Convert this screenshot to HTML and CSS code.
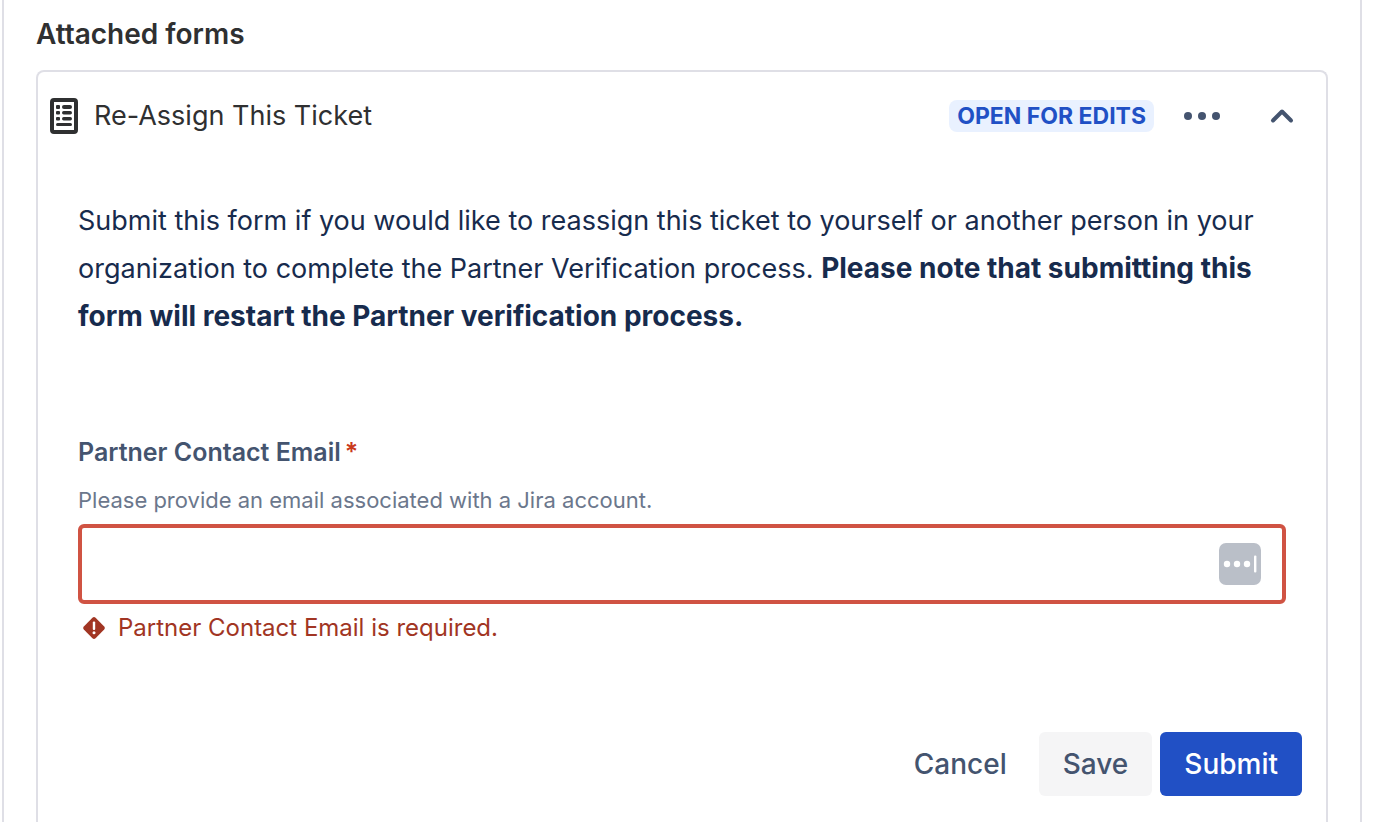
FILE: index.html
```html
<!DOCTYPE html>
<html lang="en">
<head>
<meta charset="utf-8">
<title>Attached forms</title>
<link rel="stylesheet" href="styles.css">
</head>
<body>
<main class="panel">
  <h2 class="panel-title">Attached forms</h2>
  <section class="card">
    <header class="card-header">
      <svg class="form-icon" viewBox="0 0 28 36" aria-hidden="true">
        <rect x="2" y="2" width="24" height="32" rx="2" fill="none" stroke="#2f3031" stroke-width="4"/>
        <g fill="#2f3031">
          <rect x="6" y="7" width="4" height="4" rx="1"/><rect x="12" y="7" width="10" height="4" rx="2"/>
          <rect x="6" y="13" width="4" height="3.4" rx="1"/><rect x="12" y="13" width="10" height="3.4" rx="1.7"/>
          <rect x="6" y="19" width="4" height="3.4" rx="1"/><rect x="12" y="19" width="10" height="3.4" rx="1.7"/>
          <rect x="6" y="25" width="16" height="3" rx="1.5"/>
        </g>
      </svg>
      <h3 class="card-title">Re-Assign This Ticket</h3>
      <span class="lozenge">OPEN FOR EDITS</span>
      <button class="icon-button" type="button" aria-label="More actions">
        <svg width="36" height="8" viewBox="0 0 36 8" fill="#44546f"><circle cx="4" cy="4" r="4"/><circle cx="18" cy="4" r="4"/><circle cx="32" cy="4" r="4"/></svg>
      </button>
      <button class="icon-button" type="button" aria-label="Collapse">
        <svg width="24" height="16" viewBox="0 0 24 16" fill="none" stroke="#44546f" stroke-width="4" stroke-linecap="round" stroke-linejoin="round"><path d="M3 12.5 12 3.5 21 12.5"/></svg>
      </button>
    </header>
    <form class="form" novalidate>
      <p class="intro">Submit this form if you would like to reassign this ticket to yourself or another person in your organization to complete the Partner Verification process. <strong>Please note that submitting this form will restart the Partner verification process.</strong></p>
      <label class="label" for="email">Partner Contact Email<span class="required">*</span></label>
      <p class="help" id="email-help">Please provide an email associated with a Jira account.</p>
      <div class="field">
        <input class="input" id="email" type="email" aria-describedby="email-help email-error" aria-invalid="true">
        <svg class="autofill" viewBox="0 0 42 42" aria-hidden="true">
          <rect width="42" height="42" rx="7" fill="#babfc8"/>
          <g fill="#fff"><circle cx="8" cy="21" r="3.2"/><circle cx="18" cy="21" r="3.2"/><circle cx="28" cy="21" r="3.2"/><rect x="35" y="12.5" width="2.4" height="17" rx="1"/></g>
        </svg>
      </div>
      <p class="error" id="email-error">
        <svg class="error-icon" viewBox="0 0 24 24" aria-hidden="true">
          <rect x="3.7" y="3.7" width="16.6" height="16.6" rx="2.2" transform="rotate(45 12 12)" fill="#a13523"/>
          <rect x="10.8" y="5.6" width="2.4" height="8.4" rx="1" fill="#fff"/><circle cx="12" cy="16.8" r="1.5" fill="#fff"/>
        </svg>
        Partner Contact Email is required.
      </p>
      <div class="actions">
        <button class="button button-subtle" type="button">Cancel</button>
        <button class="button button-default" type="button">Save</button>
        <button class="button button-primary" type="submit">Submit</button>
      </div>
    </form>
  </section>
</main>
</body>
</html>
```
FILE: styles.css
```css
* {
  box-sizing: border-box;
}

body {
  margin: 0;
  min-height: 100vh;
  display: flex;
  background: #fff;
  color: #172b4d;
  font-family: Inter, "Liberation Sans", sans-serif;
}

h2, h3, p {
  margin: 0;
}

button {
  border: 0;
  background: none;
  font-family: inherit;
  cursor: pointer;
}

.panel {
  flex: 1;
  margin: 0 32px 0 2px;
  padding: 18px 32px 0;
  border: 2px solid #dfdfe6;
  border-width: 0 2px;
  display: flex;
  flex-direction: column;
}

.panel-title {
  margin-bottom: 20px;
  font-size: 28px;
  font-weight: 600;
  line-height: 32px;
  color: #2f3031;
}

.card {
  flex: 1;
  border: 2px solid #dfdfe6;
  border-bottom: 0;
  border-radius: 8px 8px 0 0;
}

.card-header {
  display: flex;
  align-items: center;
  padding: 20px 20px 20px 12px;
}

.form-icon {
  width: 28px;
  height: 36px;
  margin-right: 16px;
}

.card-title {
  flex: 1;
  font-size: 27px;
  font-weight: 400;
  line-height: 48px;
  color: #2f3031;
}

.lozenge {
  margin-right: 18px;
  padding: 0 8px;
  border-radius: 8px;
  background: #e9f1ff;
  color: #2150c5;
  font-size: 23px;
  font-weight: 700;
  line-height: 32px;
}

.icon-button {
  display: flex;
  padding: 12px;
}

.icon-button + .icon-button {
  margin-left: 26px;
}

.form {
  padding: 37px 24px 24px 40px;
}

.intro {
  margin-right: 16px;
  font-size: 27px;
  line-height: 48px;
}

.intro strong {
  font-size: 28px;
  font-weight: 700;
  line-height: 32px;
}

.label {
  display: block;
  margin: 95px 0 16px;
  color: #44546f;
  font-size: 25px;
  font-weight: 600;
  line-height: 32px;
}

.required {
  margin-left: 4px;
  color: #ca3a1c;
}

.help {
  color: #6b778c;
  font-size: 22px;
  line-height: 32px;
}

.field {
  position: relative;
  margin: 8px 16px 8px 0;
}

.input {
  display: block;
  width: 100%;
  height: 80px;
  padding: 0 72px 0 16px;
  border: 4px solid #d05343;
  border-radius: 6px;
  outline: 0;
  background: #fff;
  color: inherit;
  font: inherit;
  font-size: 27px;
}

.autofill {
  position: absolute;
  top: 19px;
  right: 25px;
  width: 42px;
  height: 42px;
}

.error {
  display: flex;
  align-items: center;
  gap: 12px;
  padding-left: 4px;
  color: #a13523;
  font-size: 24px;
  line-height: 32px;
}

.error-icon {
  width: 24px;
  height: 24px;
}

.actions {
  display: flex;
  justify-content: flex-end;
  gap: 8px;
  margin-top: 88px;
}

.button {
  padding: 0 24px;
  border-radius: 6px;
  color: #44546f;
  font-size: 28px;
  font-weight: 500;
  line-height: 64px;
}

.button-default {
  background: #f5f5f6;
}

.button-primary {
  background: #2150c5;
  color: #fff;
}
```
